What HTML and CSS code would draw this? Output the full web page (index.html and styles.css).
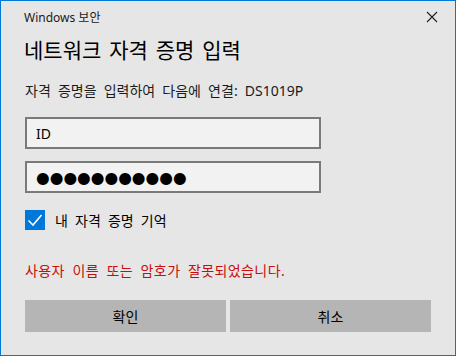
FILE: index.html
```html
<!DOCTYPE html>
<html lang="ko">
<head>
    <meta charset="UTF-8">
    <meta name="viewport" content="width=device-width, initial-scale=1.0">
    <title>Windows 보안</title>
    <link rel="stylesheet" href="styles.css">
</head>
<body>
    <div class="dialog">
        <div class="titlebar">
            <span class="app-name">Windows 보안</span>
            <button class="close" aria-label="닫기">
                <svg width="12" height="12" viewBox="0 0 12 12"><path d="M1 1L11 11M11 1L1 11" stroke="#1f1f1f" stroke-width="1.1" fill="none"/></svg>
            </button>
        </div>
        <h1 class="heading">네트워크 자격 증명 입력</h1>
        <div class="body">
            <p class="prompt">자격 증명을 입력하여 다음에 연결: DS1019P</p>
            <input class="field" type="text" value="ID">
            <input class="field secret" type="text" value="●●●●●●●●●●●">
            <label class="remember">
                <span class="check">
                    <svg width="20" height="20" viewBox="0 0 20 20"><path d="M3.5 10.5L8 15L16.5 5" stroke="#fff" stroke-width="1.6" fill="none"/></svg>
                </span>
                내 자격 증명 기억
            </label>
            <p class="error">사용자 이름 또는 암호가 잘못되었습니다.</p>
            <div class="actions">
                <button class="btn">확인</button>
                <button class="btn">취소</button>
            </div>
        </div>
    </div>
</body>
</html>
```

FILE: styles.css
```css
body { margin: 0; font-family: "Noto Sans", "Noto Sans CJK KR", sans-serif; color: #000; }
.dialog { width: 456px; height: 356px; box-sizing: border-box; border: 1px solid #0078d7; background: #e6e6e6; }
.titlebar { height: 31px; display: flex; align-items: center; justify-content: space-between; padding: 0 17px 0 23px; }
.app-name { font-size: 12px; color: #1a1a1a; }
.close { border: none; background: none; padding: 0; width: 12px; height: 12px; display: flex; }
.heading { margin: 2px 0 0 23px; font-size: 21px; line-height: 30px; font-weight: normal; word-spacing: 2px; font-family: "Noto Sans CJK KR", sans-serif; color: #000; }
.body { padding: 0 24px; }
.prompt { margin: 17px 0 0; font-size: 14px; line-height: 20px; word-spacing: 3.5px; color: #1a1a1a; }
.field { display: block; box-sizing: border-box; width: 296px; height: 32px; margin: 16px 0 0; padding: 0 9px; border: 2px solid #7a7a7a; background: #f2f2f2; font-family: "Noto Sans", sans-serif; font-size: 14px; color: #000; outline: none; }
.field + .field { margin-top: 12px; }
.secret { font-family: "DejaVu Sans", sans-serif; font-size: 15.7px; }
.remember { display: flex; align-items: center; gap: 10px; margin-top: 17px; height: 20px; font-size: 14px; word-spacing: 3.5px; }
.check { width: 20px; height: 20px; background: #0078d7; display: flex; }
.error { margin: 31px 0 0; font-size: 14px; line-height: 20px; word-spacing: 3.5px; letter-spacing: 0.4px; color: #c80d0d; }
.actions { display: flex; gap: 4px; margin-top: 19px; width: 406px; }
.btn { flex: 1; height: 32px; border: none; background: #b5b5b5; font-family: "Noto Sans CJK KR", sans-serif; font-size: 14px; color: #000; }
```
